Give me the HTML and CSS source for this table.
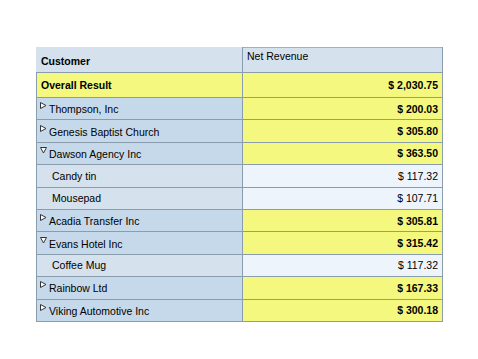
FILE: index.html
```html
<!DOCTYPE html>
<html lang="en">
<head>
    <meta charset="UTF-8">
    <title>Net Revenue by Customer</title>
    <link rel="stylesheet" href="styles.css">
</head>
<body>
    <table class="report">
        <colgroup>
            <col class="col-dim">
            <col class="col-measure">
        </colgroup>
        <tr class="head">
            <th class="dim">Customer</th>
            <th class="measure">Net Revenue</th>
        </tr>
        <tr class="total">
            <td class="dim">Overall Result</td>
            <td class="val">$ 2,030.75</td>
        </tr>
        <tr class="group">
            <td class="dim"><svg class="tri" width="7" height="7" viewBox="0 0 7 7"><path d="M0.5 0.5 L6 3.5 L0.5 6.5 Z" fill="#fff" stroke="#333"/></svg>Thompson, Inc</td>
            <td class="val">$ 200.03</td>
        </tr>
        <tr class="group">
            <td class="dim"><svg class="tri" width="7" height="7" viewBox="0 0 7 7"><path d="M0.5 0.5 L6 3.5 L0.5 6.5 Z" fill="#fff" stroke="#333"/></svg>Genesis Baptist Church</td>
            <td class="val">$ 305.80</td>
        </tr>
        <tr class="group">
            <td class="dim"><svg class="tri" width="7" height="7" viewBox="0 0 7 7"><path d="M0.5 0.5 L6.5 0.5 L3.5 6 Z" fill="#fff" stroke="#333"/></svg>Dawson Agency Inc</td>
            <td class="val">$ 363.50</td>
        </tr>
        <tr class="item">
            <td class="dim">Candy tin</td>
            <td class="val">$ 117.32</td>
        </tr>
        <tr class="item">
            <td class="dim">Mousepad</td>
            <td class="val">$ 107.71</td>
        </tr>
        <tr class="group">
            <td class="dim"><svg class="tri" width="7" height="7" viewBox="0 0 7 7"><path d="M0.5 0.5 L6 3.5 L0.5 6.5 Z" fill="#fff" stroke="#333"/></svg>Acadia Transfer Inc</td>
            <td class="val">$ 305.81</td>
        </tr>
        <tr class="group">
            <td class="dim"><svg class="tri" width="7" height="7" viewBox="0 0 7 7"><path d="M0.5 0.5 L6.5 0.5 L3.5 6 Z" fill="#fff" stroke="#333"/></svg>Evans Hotel Inc</td>
            <td class="val">$ 315.42</td>
        </tr>
        <tr class="item">
            <td class="dim">Coffee Mug</td>
            <td class="val">$ 117.32</td>
        </tr>
        <tr class="group">
            <td class="dim"><svg class="tri" width="7" height="7" viewBox="0 0 7 7"><path d="M0.5 0.5 L6 3.5 L0.5 6.5 Z" fill="#fff" stroke="#333"/></svg>Rainbow Ltd</td>
            <td class="val">$ 167.33</td>
        </tr>
        <tr class="group">
            <td class="dim"><svg class="tri" width="7" height="7" viewBox="0 0 7 7"><path d="M0.5 0.5 L6 3.5 L0.5 6.5 Z" fill="#fff" stroke="#333"/></svg>Viking Automotive Inc</td>
            <td class="val">$ 300.18</td>
        </tr>
    </table>
</body>
</html>
```

FILE: styles.css
```css
body {
    margin: 0;
    padding: 47px 0 0 36px;
    background: #fff;
    font-family: 'Liberation Sans', Arial, sans-serif;
    font-size: 10.5px;
    color: #000;
}

.report {
    border-collapse: collapse;
    table-layout: fixed;
    width: 406px;
}

.col-dim {
    width: 206px;
}

.col-measure {
    width: 200px;
}

.report th,
.report td {
    border: 1px solid #8a9dad;
    height: 21.4px;
    padding: 0 4px;
    white-space: nowrap;
    overflow: hidden;
}

.report .dim {
    text-align: left;
}

.head th {
    background: #d5e1ec;
    height: 22px;
}

.head .dim {
    font-weight: bold;
    border-top-color: #d5e1ec;
    border-left-color: #d5e1ec;
    padding-top: 1px;
}

.head .measure {
    font-weight: normal;
    text-align: left;
    vertical-align: top;
    padding-top: 2px;
    border-top-color: #a0b0bf;
}

.total td {
    background: #f4f87f;
    font-weight: bold;
    height: 24px;
}

.group .dim {
    background: #c6d9ea;
    padding-left: 3px;
}

.item .dim {
    background: #d5e1ec;
    padding-left: 15px;
}

.val {
    text-align: right;
}

.total .val,
.group .val {
    background: #f4f87f;
    font-weight: bold;
}

.item .val {
    background: #eef4fb;
}

.tri {
    vertical-align: 4px;
    margin-right: 2px;
}
```
